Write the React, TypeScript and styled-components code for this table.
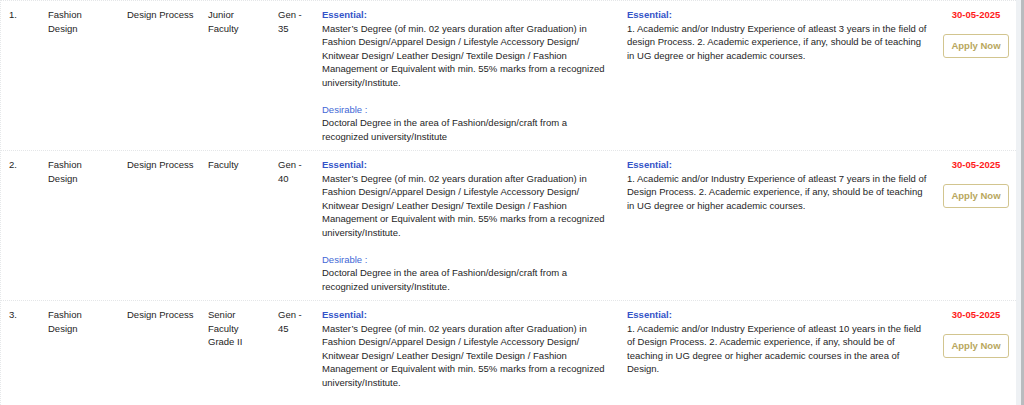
import React from "react";
import styled, { createGlobalStyle } from "styled-components";

type Job = {
  no: string;
  dept: string;
  discipline: string;
  post: string;
  gen: string;
  experience: string;
  desirable: string;
};

const essential =
  "Master’s Degree (of min. 02 years duration after Graduation) in Fashion Design/Apparel Design / Lifestyle Accessory Design/ Knitwear Design/ Leather Design/ Textile Design / Fashion Management or Equivalent with min. 55% marks from a recognized university/Institute.";

const jobs: Job[] = [
  {
    no: "1.",
    dept: "Fashion Design",
    discipline: "Design Process",
    post: "Junior Faculty",
    gen: "Gen - 35",
    experience:
      "1. Academic and/or Industry Experience of atleast 3 years in the field of design Process. 2. Academic experience, if any, should be of teaching in UG degree or higher academic courses.",
    desirable:
      "Doctoral Degree in the area of Fashion/design/craft from a recognized university/Institute",
  },
  {
    no: "2.",
    dept: "Fashion Design",
    discipline: "Design Process",
    post: "Faculty",
    gen: "Gen - 40",
    experience:
      "1. Academic and/or Industry Experience of atleast 7 years in the field of Design Process. 2. Academic experience, if any, should be of teaching in UG degree or higher academic courses.",
    desirable:
      "Doctoral Degree in the area of Fashion/design/craft from a recognized university/Institute.",
  },
  {
    no: "3.",
    dept: "Fashion Design",
    discipline: "Design Process",
    post: "Senior Faculty Grade II",
    gen: "Gen - 45",
    experience:
      "1. Academic and/or Industry Experience of atleast 10 years in the field of Design Process. 2. Academic experience, if any, should be of teaching in UG degree or higher academic courses in the area of Design.",
    desirable:
      "Doctoral Degree in the area of Fashion/design/craft from a recognized university/Institute.",
  },
];

const App = () => {
  return (
    <>
      <GlobalStyle />
      <Page>
        <Table>
          {jobs.map((job) => (
            <Row key={job.no}>
              <Cell>{job.no}</Cell>
              <Cell>{job.dept}</Cell>
              <Cell>{job.discipline}</Cell>
              <Cell>{job.post}</Cell>
              <Cell>{job.gen}</Cell>
              <Cell>
                <Label>Essential:</Label>
                <Para>{essential}</Para>
                <Gap />
                <Label soft>Desirable :</Label>
                <Para>{job.desirable}</Para>
              </Cell>
              <Cell>
                <Label>Essential:</Label>
                <Para>{job.experience}</Para>
              </Cell>
              <ActionCell>
                <LastDate>30-05-2025</LastDate>
                <ApplyButton>Apply Now</ApplyButton>
              </ActionCell>
            </Row>
          ))}
        </Table>
        <Gutter />
      </Page>
    </>
  );
};

/**
 * styles
 */

const GlobalStyle = createGlobalStyle`
  html, body {
    margin: 0;
    padding: 0;
    background: #fff;
  }
  body {
    font-family: "Liberation Sans", Arial, sans-serif;
    color: #1e1e1e;
  }
`;

const Page = styled.div`
  display: flex;
  width: 1024px;
  height: 405px;
  overflow: hidden;
`;

const Table = styled.div`
  width: 1016px;
  border-left: 1px dotted #e6e8ea;
`;

const Gutter = styled.div`
  width: 5px;
  background: #eef1f4;
  border-right: 3px solid #b9bcbf;
`;

const Row = styled.div`
  display: grid;
  grid-template-columns: 39px 79px 81px 70px 44px 305px 316px 81px;
  border-top: 1px dotted #e4e6e8;
`;

const Cell = styled.div`
  padding: 7px 6px 7px 8px;
  font-size: 9.5px;
  line-height: 13.5px;
  color: #1e1e1e;
`;

const Label = styled.div<{ soft?: boolean }>`
  font-weight: ${(p) => (p.soft ? 400 : 700)};
  color: ${(p) => (p.soft ? "#4268d6" : "#3454c8")};
`;

const Para = styled.div`
  color: #1e1e1e;
`;

const Gap = styled.div`
  height: 13.5px;
`;

const ActionCell = styled.div`
  display: flex;
  flex-direction: column;
  align-items: center;
  padding: 7px 6px 7px 7px;
  font-size: 9.5px;
  line-height: 13.5px;
`;

const LastDate = styled.div`
  color: #ff1a1a;
  font-weight: 700;
  text-align: center;
`;

const ApplyButton = styled.button`
  margin-top: 12px;
  width: 66px;
  height: 24px;
  padding: 0;
  background: #fff;
  border: 1px solid #d2c58f;
  border-radius: 3px;
  color: #b8a75d;
  font-family: "Liberation Sans", Arial, sans-serif;
  font-size: 9.5px;
  font-weight: 700;
  cursor: pointer;
`;

export default App;
